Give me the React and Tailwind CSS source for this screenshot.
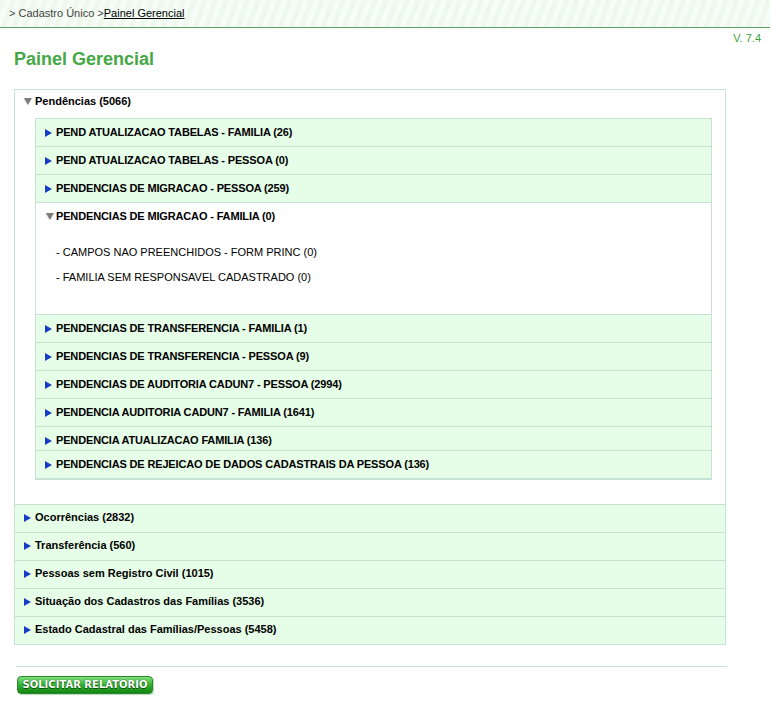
const pendencias = [
  { label: "PEND ATUALIZACAO TABELAS - FAMILIA (26)" },
  { label: "PEND ATUALIZACAO TABELAS - PESSOA (0)" },
  { label: "PENDENCIAS DE MIGRACAO - PESSOA (259)" },
  {
    label: "PENDENCIAS DE MIGRACAO - FAMILIA (0)",
    open: true,
    items: [
      "- CAMPOS NAO PREENCHIDOS - FORM PRINC (0)",
      "- FAMILIA SEM RESPONSAVEL CADASTRADO (0)",
    ],
  },
  { label: "PENDENCIAS DE TRANSFERENCIA - FAMILIA (1)" },
  { label: "PENDENCIAS DE TRANSFERENCIA - PESSOA (9)" },
  { label: "PENDENCIAS DE AUDITORIA CADUN7 - PESSOA (2994)" },
  { label: "PENDENCIA AUDITORIA CADUN7 - FAMILIA (1641)" },
  { label: "PENDENCIA ATUALIZACAO FAMILIA (136)", short: true },
  { label: "PENDENCIAS  DE  REJEICAO DE DADOS CADASTRAIS DA PESSOA (136)" },
];

const outros = [
  "Ocorrências (2832)",
  "Transferência (560)",
  "Pessoas sem Registro Civil (1015)",
  "Situação dos Cadastros das Famílias (3536)",
  "Estado Cadastral das Famílias/Pessoas (5458)",
];

const ArrowRight = () => (
  <svg width="7" height="8" viewBox="0 0 7 8" className="shrink-0">
    <polygon points="0,0 7,4 0,8" fill="#1b3bc4" />
  </svg>
);

const ArrowDown = () => (
  <svg width="9" height="7" viewBox="0 0 9 7" className="shrink-0">
    <polygon points="0,0 8,0 4,7" fill="#e4e4e4" />
    <polygon points="1,0 9,0 5,7" fill="#7c7c7c" />
  </svg>
);

export default function App() {
  return (
    <div className="min-h-[702px] bg-white font-['Liberation_Sans',Arial,sans-serif] text-[11px] text-black">
      <div className="h-[28px] border-b border-[#5ca45c] bg-[repeating-linear-gradient(110deg,#edf9ed_0px,#edf9ed_5px,#f6fcf6_5px,#f6fcf6_10px)] flex items-center pl-[9px]">
        <span className="text-[#444]">&gt; Cadastro Único &gt;</span>
        <span className="underline text-black">Painel Gerencial</span>
      </div>

      <div className="mt-[4px] h-[13px] leading-[13px] text-right pr-[9px] text-[#3aa53a]">
        V. 7.4
      </div>

      <h1 className="mt-[3px] ml-[14px] h-[22px] leading-[22px] text-[18px] font-bold text-[#45a845]">
        Painel Gerencial
      </h1>

      <div className="mt-[19px] ml-[14px] w-[712px] border border-[#c6e2d4]">
        <div className="h-[23px] flex items-center gap-[3px] pl-[8px] font-bold">
          <ArrowDown />
          <span>Pendências (5066)</span>
        </div>

        <div className="mt-[5px] ml-[20px] mr-[13px] mb-[24px] border-x border-b-2 border-[#c6e2d4]">
          {pendencias.map((p) => (
            <div key={p.label} className="border-t border-[#c6e2d4]">
              <div
                className={`${p.short ? "h-[23px] pt-[4px]" : "h-[27px]"} ${
                  p.open ? "bg-white gap-[2px]" : "bg-[#e6fde7] gap-[4px]"
                } flex items-center pl-[9px] font-bold tracking-[-0.15px]`}
              >
                {p.open ? <ArrowDown /> : <ArrowRight />}
                <span>{p.label}</span>
              </div>
              {p.open && (
                <div className="pl-[20px] pt-[16px] pb-[30px] flex flex-col gap-[12px] leading-[13px]">
                  {p.items.map((i) => (
                    <div key={i}>{i}</div>
                  ))}
                </div>
              )}
            </div>
          ))}
        </div>

        {outros.map((o) => (
          <div
            key={o}
            className="h-[28px] pb-[2px] border-t border-[#c6e2d4] bg-[#e6fde7] flex items-center gap-[4px] pl-[9px] font-bold"
          >
            <ArrowRight />
            <span>{o}</span>
          </div>
        ))}
      </div>

      <div className="mt-[21px] ml-[16px] w-[711px] h-px bg-[#c6e2d4]" />

      <button className="mt-[9px] ml-[17px] w-[136px] h-[18px] rounded-[4px] border border-[#2b8a2b] bg-gradient-to-b from-[#7ee07e] via-[#2fb12f] to-[#148514] font-['DejaVu_Sans',Verdana,sans-serif] text-[10px] font-bold leading-[16px] text-white [text-shadow:0_1px_0_#0b4f0b,0_0_1px_#0b4f0b] shadow-[1px_1px_1px_#b8d8b8]">
        SOLICITAR RELATÓRIO
      </button>
    </div>
  );
}
